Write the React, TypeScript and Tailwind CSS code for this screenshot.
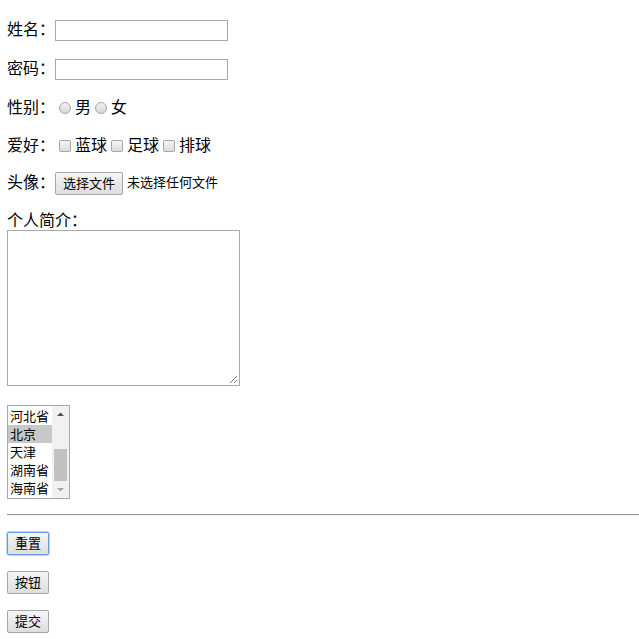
import React from "react";

const F = { fontFamily: '"Microsoft YaHei", "Noto Sans CJK SC", sans-serif' };

function Radio() {
  return (
    <span className="inline-block w-[12px] h-[12px] rounded-full border border-[#a6a6a6] bg-gradient-to-b from-[#f2f2f2] to-[#d8d8d8] mx-[4px] shrink-0" />
  );
}
function Check() {
  return (
    <span className="inline-block w-[12px] h-[12px] rounded-[2px] border border-[#a6a6a6] bg-gradient-to-b from-[#f4f4f4] to-[#dcdcdc] mx-[4px] shrink-0" />
  );
}
function T({ children }: { children: React.ReactNode }) {
  return <span className="mb-[4px]">{children}</span>;
}
function Btn({ children, focus }: { children: React.ReactNode; focus?: boolean }) {
  return (
    <div
      className={
        "inline-flex items-center justify-center h-[23px] px-[7px] text-[13px] text-black rounded-[2px] bg-gradient-to-b from-[#f5f5f5] to-[#dedede] " +
        (focus ? "border border-[#6b9be0] shadow-[0_0_0_1px_#bcd3f5]" : "border border-[#a6a6a6]")
      }
    >
      <span className="mb-[1px]">{children}</span>
    </div>
  );
}

export default function App() {
  const opts = ["河北省", "北京", "天津", "湖南省", "海南省"];
  return (
    <div className="w-[639px] h-[639px] bg-white text-black text-[16px] pl-[7px] pt-[18px] overflow-hidden" style={F}>
      <div className="flex items-center h-[24px]">
        <T>姓名：</T>
        <span className="inline-block w-[173px] h-[21px] border border-[#a9a9a9] bg-white" />
      </div>
      <div className="flex items-center h-[24px] mt-[15px]">
        <T>密码：</T>
        <span className="inline-block w-[173px] h-[21px] border border-[#a9a9a9] bg-white" />
      </div>
      <div className="flex items-center h-[24px] mt-[15px]">
        <T>性别：</T>
        <Radio />
        <T>男</T>
        <Radio />
        <T>女</T>
      </div>
      <div className="flex items-center h-[24px] mt-[14px]">
        <T>爱好：</T>
        <Check />
        <T>蓝球</T>
        <Check />
        <T>足球</T>
        <Check />
        <T>排球</T>
      </div>
      <div className="flex items-center h-[24px] mt-[13px]">
        <T>头像：</T>
        <Btn>选择文件</Btn>
        <span className="text-[13px] ml-[4px] mb-[2px]">未选择任何文件</span>
      </div>
      <div className="mt-[15px] h-[20px] leading-[18px]">个人简介：</div>
      <div className="relative w-[233px] h-[156px] border border-[#a9a9a9] bg-white">
        <svg className="absolute right-[1px] bottom-[1px]" width="9" height="9" viewBox="0 0 9 9">
          <line x1="1" y1="8" x2="8" y2="1" stroke="#777" strokeWidth="1" />
          <line x1="5" y1="8" x2="8" y2="5" stroke="#777" strokeWidth="1" />
        </svg>
      </div>
      <div className="mt-[19px] flex w-[63px] h-[94px] border border-[#a9a9a9] bg-white">
        <div className="flex-1 flex flex-col text-[13px] leading-[17px] pt-[1px]">
          {opts.map((o, i) => (
            <div key={o} className={"pl-[2px] h-[18px] " + (i === 1 ? "bg-[#c8c8c8]" : "")}>
              {o}
            </div>
          ))}
        </div>
        <div className="w-[17px] bg-[#f1f1f1] flex flex-col items-center">
          <svg width="17" height="17" viewBox="0 0 17 17">
            <path d="M5 10 L8.5 6.5 L12 10 Z" fill="#505050" />
          </svg>
          <div className="w-[13px] h-[32px] bg-[#c1c1c1] mt-[26px]" />
          <div className="flex-1" />
          <svg width="17" height="17" viewBox="0 0 17 17">
            <path d="M5 7 L8.5 10.5 L12 7 Z" fill="#a3a3a3" />
          </svg>
        </div>
      </div>
      <div className="mt-[15px] h-[2px] border-t border-[#9a9a9a] border-b border-b-[#eeeeee]" />
      <div className="mt-[16px] flex">
        <Btn focus>重置</Btn>
      </div>
      <div className="mt-[16px] flex">
        <Btn>按钮</Btn>
      </div>
      <div className="mt-[16px] flex">
        <Btn>提交</Btn>
      </div>
    </div>
  );
}
